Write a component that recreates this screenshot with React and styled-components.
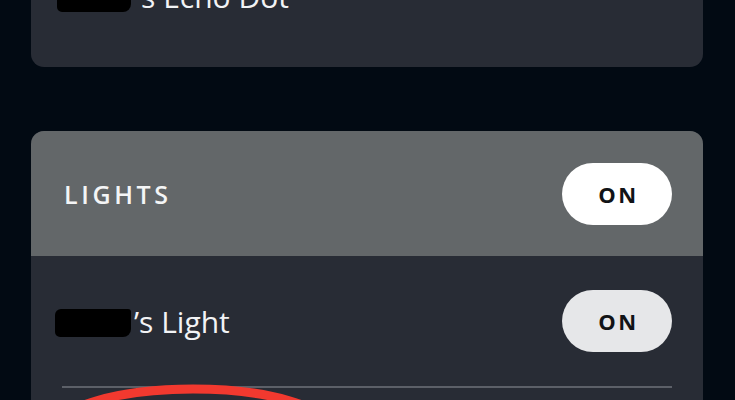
import styled, { createGlobalStyle } from 'styled-components';

const GlobalStyle = createGlobalStyle`
  html, body {
    margin: 0;
    padding: 0;
    background: #020a13;
    overflow: hidden;
  }
  body {
    font-family: "Open Sans", "Noto Sans", sans-serif;
  }
`;

const Screen = styled.div`
  height: 400px;
  padding: 0 32px 0 31px;
  background: #020a13;
  display: flex;
  flex-direction: column;
  gap: 64px;
  overflow: hidden;
`;

const DeviceCard = styled.div`
  margin-top: -60px;
  background: #282c35;
  border-radius: 0 0 13px 13px;
  padding: 38px 0 51px 26px;
`;

const DeviceName = styled.div`
  display: flex;
  align-items: center;
  color: #f2f3f5;
  font-size: 30px;
  line-height: 38px;
  letter-spacing: 0;
`;

const Redacted = styled.span`
  display: inline-block;
  width: ${({ $w }) => $w}px;
  height: ${({ $h }) => $h}px;
  margin-right: ${({ $gap }) => $gap}px;
  margin-top: ${({ $top }) => $top || 0}px;
  background: #000;
  border-radius: 6px 3px 8px 5px;
`;

const GroupCard = styled.div`
  position: relative;
  background: #282c35;
  border-radius: 13px 13px 0 0;
  flex: 1;
`;

const GroupHeader = styled.div`
  height: 125px;
  background: #636769;
  border-radius: 13px 13px 0 0;
  display: flex;
  align-items: center;
  justify-content: space-between;
  padding: 0 31px 0 33px;
`;

const GroupTitle = styled.span`
  color: #f4f5f6;
  font-size: 25px;
  font-weight: 600;
  letter-spacing: 3.6px;
`;

const Toggle = styled.button`
  width: 110px;
  height: 62px;
  border: none;
  border-radius: 31px;
  background: ${({ $light }) => ($light ? '#ffffff' : '#e6e7e9')};
  color: #111316;
  font-family: "Open Sans", "Noto Sans", sans-serif;
  font-size: 22px;
  font-weight: 700;
  letter-spacing: 2.5px;
  padding: 0 0 0 3px;
  display: flex;
  align-items: center;
  justify-content: center;
`;

const DeviceRow = styled.div`
  height: 130px;
  margin: 0 31px;
  border-bottom: 2px solid #5c6068;
  display: flex;
  align-items: center;
  justify-content: space-between;
`;

const RowLabel = styled.div`
  display: flex;
  align-items: center;
  margin-left: -7px;
  color: #f2f3f5;
  font-size: 30px;
  letter-spacing: 0;
`;

const Annotation = styled.svg`
  position: absolute;
  left: 0;
  top: 248px;
  overflow: visible;
  pointer-events: none;
`;

export default function App() {
  return (
    <>
      <GlobalStyle />
      <Screen>
        <DeviceCard>
          <DeviceName>
            <Redacted $w={74} $h={34} $gap={5} $top={-4} />
            ’s Echo Dot
          </DeviceName>
        </DeviceCard>
        <GroupCard>
          <GroupHeader>
            <GroupTitle>LIGHTS</GroupTitle>
            <Toggle $light>ON</Toggle>
          </GroupHeader>
          <DeviceRow>
            <RowLabel>
              <Redacted $w={76} $h={28} $gap={3} $top={4} />
              ’s Light
            </RowLabel>
            <Toggle>ON</Toggle>
          </DeviceRow>
          <Annotation width="300" height="100">
            <ellipse
              cx="162"
              cy="50"
              rx="136"
              ry="40"
              fill="none"
              stroke="#f2392f"
              strokeWidth="9"
            />
          </Annotation>
        </GroupCard>
      </Screen>
    </>
  );
}
